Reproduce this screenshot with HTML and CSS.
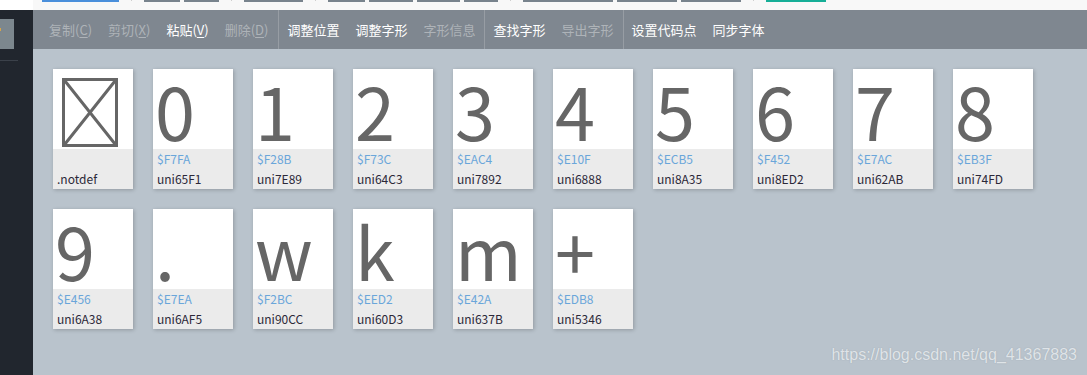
FILE: index.html
```html
<!DOCTYPE html>
<html lang="zh-CN">
<head>
<meta charset="utf-8">
<title>字形编辑</title>
<link rel="stylesheet" href="styles.css">
</head>
<body>
<div class="page">
  <div class="tabstrip">
    <div class="tab-corner"></div>
    <div class="tabs">
      <span class="tab blue w77"></span>
      <span class="dot"></span>
      <span class="tab w36"></span>
      <span class="tab w35"></span>
      <span class="dot"></span>
      <span class="tab w59"></span>
      <span class="dot"></span>
      <span class="tab w37"></span>
      <span class="tab w44"></span>
      <span class="tab w43"></span>
      <span class="tab w34"></span>
      <span class="dot"></span>
      <span class="tab w90"></span>
      <span class="tab w60"></span>
      <span class="tab w60"></span>
      <span class="dot"></span>
      <span class="tab teal w60"></span>
    </div>
  </div>
  <div class="main">
    <aside class="sidebar">
      <div class="side-btn"><span class="side-mark"></span></div>
      <div class="side-line"></div>
    </aside>
    <section class="content">
      <nav class="toolbar">
        <div class="group">
          <span class="item disabled">复制(<u>C</u>)</span>
          <span class="item disabled">剪切(<u>X</u>)</span>
          <span class="item">粘贴(<u>V</u>)</span>
          <span class="item disabled">删除(<u>D</u>)</span>
        </div>
        <div class="group sep">
          <span class="item">调整位置</span>
          <span class="item">调整字形</span>
          <span class="item disabled">字形信息</span>
        </div>
        <div class="group sep">
          <span class="item">查找字形</span>
          <span class="item disabled">导出字形</span>
        </div>
        <div class="group sep">
          <span class="item">设置代码点</span>
          <span class="item">同步字体</span>
        </div>
      </nav>
      <div class="grid">
        <div class="card">
          <div class="glyph notdef">
            <svg width="56" height="69" viewBox="0 0 56 69"><rect x="1.5" y="1.5" width="53" height="66" fill="none" stroke="#666" stroke-width="3"/><path d="M3 3 L53 66 M53 3 L3 66" stroke="#666" stroke-width="3"/></svg>
          </div>
          <div class="info"><div class="code"></div><div class="name">.notdef</div></div>
        </div>
        <div class="card"><div class="glyph">0</div><div class="info"><div class="code">$F7FA</div><div class="name">uni65F1</div></div></div>
        <div class="card"><div class="glyph">1</div><div class="info"><div class="code">$F28B</div><div class="name">uni7E89</div></div></div>
        <div class="card"><div class="glyph">2</div><div class="info"><div class="code">$F73C</div><div class="name">uni64C3</div></div></div>
        <div class="card"><div class="glyph">3</div><div class="info"><div class="code">$EAC4</div><div class="name">uni7892</div></div></div>
        <div class="card"><div class="glyph">4</div><div class="info"><div class="code">$E10F</div><div class="name">uni6888</div></div></div>
        <div class="card"><div class="glyph">5</div><div class="info"><div class="code">$ECB5</div><div class="name">uni8A35</div></div></div>
        <div class="card"><div class="glyph">6</div><div class="info"><div class="code">$F452</div><div class="name">uni8ED2</div></div></div>
        <div class="card"><div class="glyph">7</div><div class="info"><div class="code">$E7AC</div><div class="name">uni62AB</div></div></div>
        <div class="card"><div class="glyph">8</div><div class="info"><div class="code">$EB3F</div><div class="name">uni74FD</div></div></div>
        <div class="card"><div class="glyph">9</div><div class="info"><div class="code">$E456</div><div class="name">uni6A38</div></div></div>
        <div class="card"><div class="glyph">.</div><div class="info"><div class="code">$E7EA</div><div class="name">uni6AF5</div></div></div>
        <div class="card"><div class="glyph">w</div><div class="info"><div class="code">$F2BC</div><div class="name">uni90CC</div></div></div>
        <div class="card"><div class="glyph">k</div><div class="info"><div class="code">$EED2</div><div class="name">uni60D3</div></div></div>
        <div class="card"><div class="glyph">m</div><div class="info"><div class="code">$E42A</div><div class="name">uni637B</div></div></div>
        <div class="card"><div class="glyph">+</div><div class="info"><div class="code">$EDB8</div><div class="name">uni5346</div></div></div>
      </div>
      <div class="watermark">https://blog.csdn.net/qq_41367883</div>
    </section>
  </div>
</div>
</body>
</html>
```

FILE: styles.css
```css
* { box-sizing: border-box; }
html, body { margin: 0; padding: 0; }
body {
  width: 1087px;
  height: 375px;
  overflow: hidden;
  font-family: "Noto Sans CJK SC", "Noto Sans", sans-serif;
  background: #b9c3cc;
}
.page { display: flex; flex-direction: column; height: 375px; }

.tabstrip { display: flex; height: 10px; background: #f8f8f8; flex: none; }
.tab-corner { width: 33px; background: #fff; }
.tabs { display: flex; gap: 4px; padding-left: 9px; align-items: flex-start; }
.tab { display: block; height: 2px; background: #78838d; }
.tab.blue { background: #4a8fdb; }
.tab.teal { background: #16ae97; }
.dot { display: block; width: 1px; height: 1px; background: #cfcfcf; margin: 0 8px; }
.w77 { width: 77px; } .w36 { width: 36px; } .w35 { width: 35px; } .w59 { width: 59px; }
.w37 { width: 37px; } .w44 { width: 44px; } .w43 { width: 43px; } .w34 { width: 34px; }
.w90 { width: 90px; } .w60 { width: 60px; }

.main { display: flex; flex: 1; min-height: 0; }
.sidebar { width: 33px; background: #21262e; flex: none; padding-top: 9px; }
.side-btn { width: 14px; height: 30px; background: #7c878e; position: relative; }
.side-mark { position: absolute; left: 0; top: 9px; width: 1px; height: 3px; background: #d6a44a; }
.side-line { width: 18px; height: 1px; background: #3b414a; margin-top: 11px; }

.content { flex: 1; position: relative; background: #b9c3cc; }
.toolbar {
  height: 39px;
  background: #7f8790;
  display: flex;
  align-items: stretch;
  padding-left: 8px;
  font-size: 13px;
}
.group { display: flex; align-items: center; }
.group.sep { border-left: 1px solid #979da4; margin-left: 1px; }
.group.sep:nth-child(2) { margin-left: 2px; }
.item { padding: 0 8px; color: #fff; line-height: 39px; white-space: nowrap; }
.item.disabled { color: #aeb3b8; }
.item u { text-underline-offset: 2px; }

.grid {
  display: flex;
  flex-wrap: wrap;
  gap: 20px;
  padding: 20px;
  width: 1020px;
}
.card {
  width: 80px;
  height: 120px;
  background: #fff;
  box-shadow: 1px 1px 4px rgba(0, 0, 0, 0.22);
  display: flex;
  flex-direction: column;
}
.glyph {
  height: 80px;
  font-size: 72px;
  line-height: 78px;
  padding: 2px 0 0 2px;
  color: #666;
}
.glyph.notdef { padding: 9px 0 0 9px; line-height: 0; }
.info { height: 40px; background: #ebebeb; padding-left: 4px; font-size: 12px; line-height: 20px; }
.code { height: 20px; color: #6aa6da; }
.name { color: #2b2838; }

.watermark {
  position: absolute;
  right: 10px;
  bottom: 11px;
  font-family: "Liberation Sans", Arial, sans-serif;
  font-size: 16px;
  color: rgba(236, 240, 243, 0.85);
  text-shadow: 0 0 1px rgba(120, 130, 140, 0.5);
}
```
